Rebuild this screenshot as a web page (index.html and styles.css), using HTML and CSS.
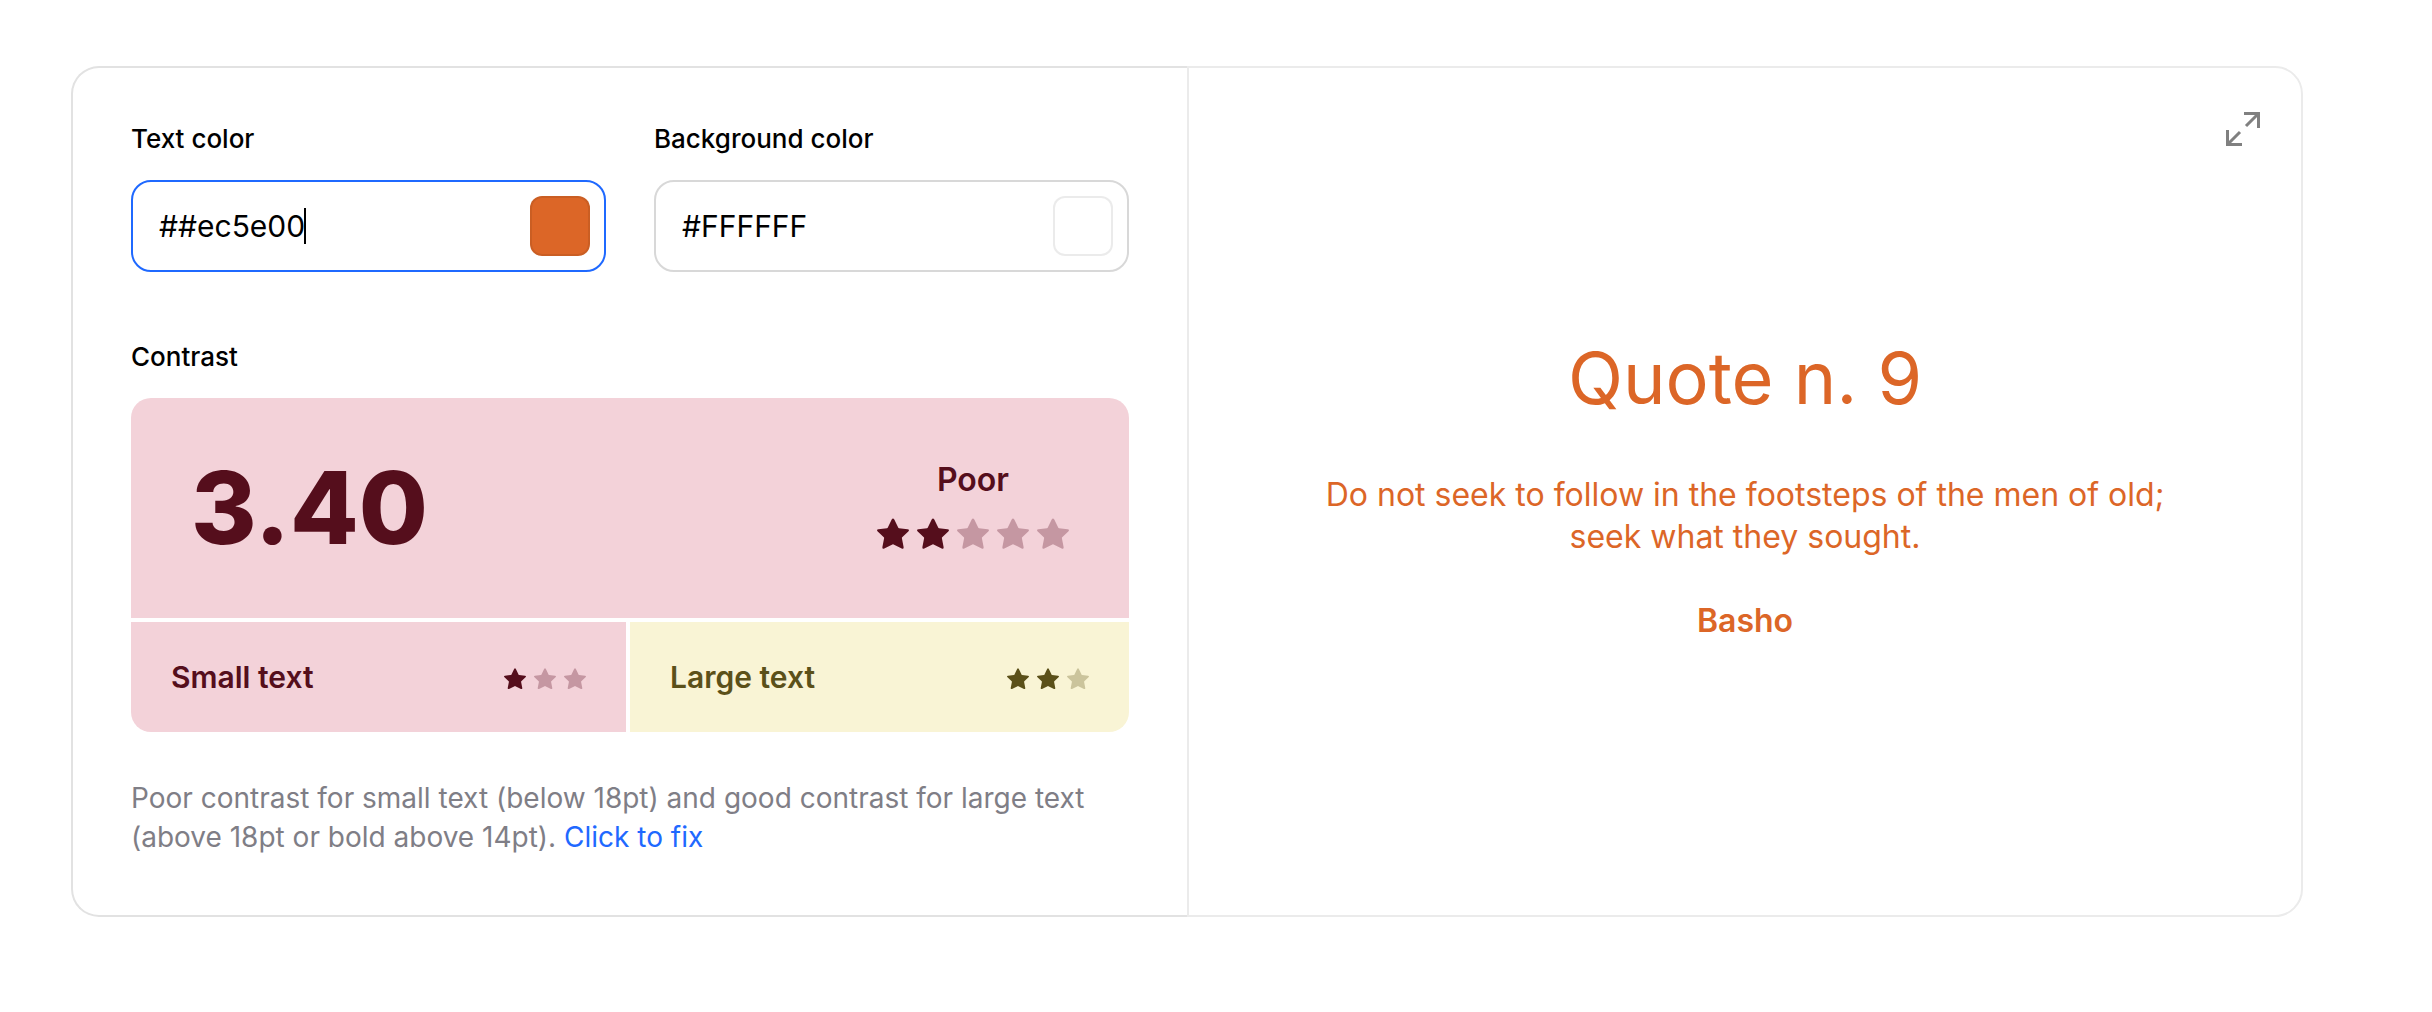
FILE: index.html
```html
<!DOCTYPE html>
<html lang="en">
<head>
<meta charset="utf-8">
<title>Color contrast checker</title>
<link rel="stylesheet" href="styles.css">
</head>
<body>
<svg class="defs" aria-hidden="true">
  <symbol id="star" viewBox="0 0 32 32">
    <path d="M14.7 1.6Q16 -.8 17.3 1.6L21.3 9.7Q21.5 10.1 22 10.2L30.6 11.2Q33 11.7 31.3 13.5L25.2 19.3Q24.8 19.7 24.9 20.3L26.6 29Q26.9 31.4 24.7 30.4L16.6 26.4Q16 26.1 15.4 26.4L7.3 30.4Q5.1 31.4 5.4 29L7.1 20.3Q7.2 19.7 6.8 19.3L.7 13.5Q-1 11.7 1.4 11.2L10 10.2Q10.5 10.1 10.7 9.7Z"/>
  </symbol>
</svg>
<main class="checker">
  <section class="controls">
    <form class="fields">
      <div class="field">
        <label class="label" for="text-color">Text color</label>
        <div class="input-box input-box-focused">
          <input class="hex" id="text-color" type="text" value="##ec5e00" spellcheck="false">
          <span class="caret"></span>
          <input class="swatch" type="color" value="#dc6627" aria-label="Pick text color">
        </div>
      </div>
      <div class="field">
        <label class="label" for="background-color">Background color</label>
        <div class="input-box">
          <input class="hex" id="background-color" type="text" value="#FFFFFF" spellcheck="false">
          <input class="swatch" type="color" value="#ffffff" aria-label="Pick background color">
        </div>
      </div>
    </form>
    <h2 class="label contrast-label">Contrast</h2>
    <div class="score">
      <div class="score-main poor">
        <strong class="ratio">3.40</strong>
        <div class="rating">
          <span class="verdict">Poor</span>
          <div class="stars" role="img" aria-label="2 of 5 stars">
            <svg class="star"><use href="#star"/></svg>
            <svg class="star"><use href="#star"/></svg>
            <svg class="star off"><use href="#star"/></svg>
            <svg class="star off"><use href="#star"/></svg>
            <svg class="star off"><use href="#star"/></svg>
          </div>
        </div>
      </div>
      <div class="score-part poor">
        <span>Small text</span>
        <div class="stars stars-small" role="img" aria-label="1 of 3 stars">
          <svg class="star"><use href="#star"/></svg>
          <svg class="star off"><use href="#star"/></svg>
          <svg class="star off"><use href="#star"/></svg>
        </div>
      </div>
      <div class="score-part good">
        <span>Large text</span>
        <div class="stars stars-small" role="img" aria-label="2 of 3 stars">
          <svg class="star"><use href="#star"/></svg>
          <svg class="star"><use href="#star"/></svg>
          <svg class="star off"><use href="#star"/></svg>
        </div>
      </div>
    </div>
    <p class="summary">Poor contrast for small text (below 18pt) and good contrast for large text (above 18pt or bold above 14pt). <a class="fix" href="#fix">Click to fix</a></p>
  </section>
  <section class="preview">
    <button class="expand" type="button" aria-label="Full screen">
      <svg class="expand-icon" viewBox="0 0 34 34"><path d="M18 1.5H32.5V16M32 2L20 14M1.5 18V32.5H16M2 32L14 20"/></svg>
    </button>
    <h1 class="quote-title">Quote n. 9</h1>
    <p class="quote">Do not seek to follow in the footsteps of the men of old; seek what they sought.</p>
    <p class="author">Basho</p>
  </section>
</main>
</body>
</html>
```
FILE: styles.css
```css
* { box-sizing: border-box; }

body {
  margin: 0;
  padding: 66px 129px 66px 71px;
  background: #fff;
  color: #000;
  font-family: Inter, "Liberation Sans", sans-serif;
}

h1, h2, p { margin: 0; }

.defs { position: absolute; width: 0; height: 0; }

.checker { display: grid; grid-template-columns: repeat(2, minmax(0, 1fr)); }

.controls {
  padding: 55px 58px 58px;
  border: 2px solid #e2e2e2;
  border-right: 0;
  border-radius: 28px 0 0 28px;
}

.fields { display: grid; grid-template-columns: repeat(2, minmax(0, 1fr)); gap: 48px; }

.label {
  display: block;
  margin-bottom: 25px;
  font-size: 26px;
  line-height: 32px;
  font-weight: 500;
}

.contrast-label { margin-top: 69px; }

.input-box {
  position: relative;
  display: flex;
  align-items: center;
  height: 92px;
  padding: 0 14px 0 26px;
  border: 2px solid #d8d8d8;
  border-radius: 20px;
}

.input-box-focused { border-color: #1f69ff; }

.hex {
  flex: 1;
  min-width: 0;
  padding: 0;
  border: 0;
  outline: 0;
  background: none;
  font: 400 30px/36px Inter, "Liberation Sans", sans-serif;
  color: #000;
}

.caret {
  position: absolute;
  left: 171px;
  width: 2px;
  height: 36px;
  background: #000;
}

.swatch {
  appearance: none;
  width: 60px;
  height: 60px;
  padding: 0;
  border: 0;
  background: none;
}
.swatch::-webkit-color-swatch-wrapper { padding: 0; }
.swatch::-webkit-color-swatch {
  border: 2px solid rgba(0, 0, 0, 0.08);
  border-radius: 12px;
}

.score {
  display: grid;
  grid-template-columns: repeat(2, minmax(0, 1fr));
  row-gap: 4px;
  border-radius: 20px;
  overflow: hidden;
}

.poor { background: #f3d2d9; color: #550e1c; }
.good { background: #f9f4d5; color: #5b5019; }

.score-main {
  grid-column: 1 / -1;
  display: flex;
  align-items: center;
  justify-content: space-between;
  height: 220px;
  padding: 0 60px;
}

.ratio { font-size: 100px; line-height: 120px; font-weight: 800; }

.rating {
  display: flex;
  flex-direction: column;
  align-items: center;
  gap: 20px;
  padding-bottom: 4px;
}

.verdict { font-size: 32px; line-height: 36px; font-weight: 600; }

.stars { display: flex; gap: 8px; }
.star { width: 32px; height: 32px; fill: currentColor; }
.stars-small { padding-top: 4px; }
.stars-small .star { width: 22px; height: 22px; }
.poor .off { fill: #c597a2; }
.good .off { fill: #cbc49c; }

.score-part {
  display: flex;
  align-items: center;
  justify-content: space-between;
  height: 110px;
  padding: 0 40px;
  font-size: 30px;
  line-height: 36px;
  font-weight: 600;
}
.score-part.poor { border-right: 4px solid #fff; }

.summary {
  margin-top: 47px;
  color: #7f7e86;
  font-size: 28px;
  line-height: 39px;
}

.fix { color: #1f69ff; text-decoration: none; }

.preview {
  position: relative;
  display: flex;
  flex-direction: column;
  align-items: center;
  justify-content: center;
  border: 2px solid #ebebeb;
  border-radius: 0 28px 28px 0;
  padding: 40px 120px;
  color: #dc6627;
  text-align: center;
}

.expand {
  position: absolute;
  top: 32px;
  right: 29px;
  display: flex;
  padding: 12px;
  border: 0;
  background: none;
  color: #808080;
}
.expand-icon { width: 34px; height: 34px; fill: none; stroke: currentColor; stroke-width: 3; }

.quote-title { font-size: 72px; line-height: 72px; font-weight: 400; }
.quote { margin: 60px 0 42px; font-size: 32px; line-height: 42px; }
.author { font-size: 32px; line-height: 42px; font-weight: 600; }
```
